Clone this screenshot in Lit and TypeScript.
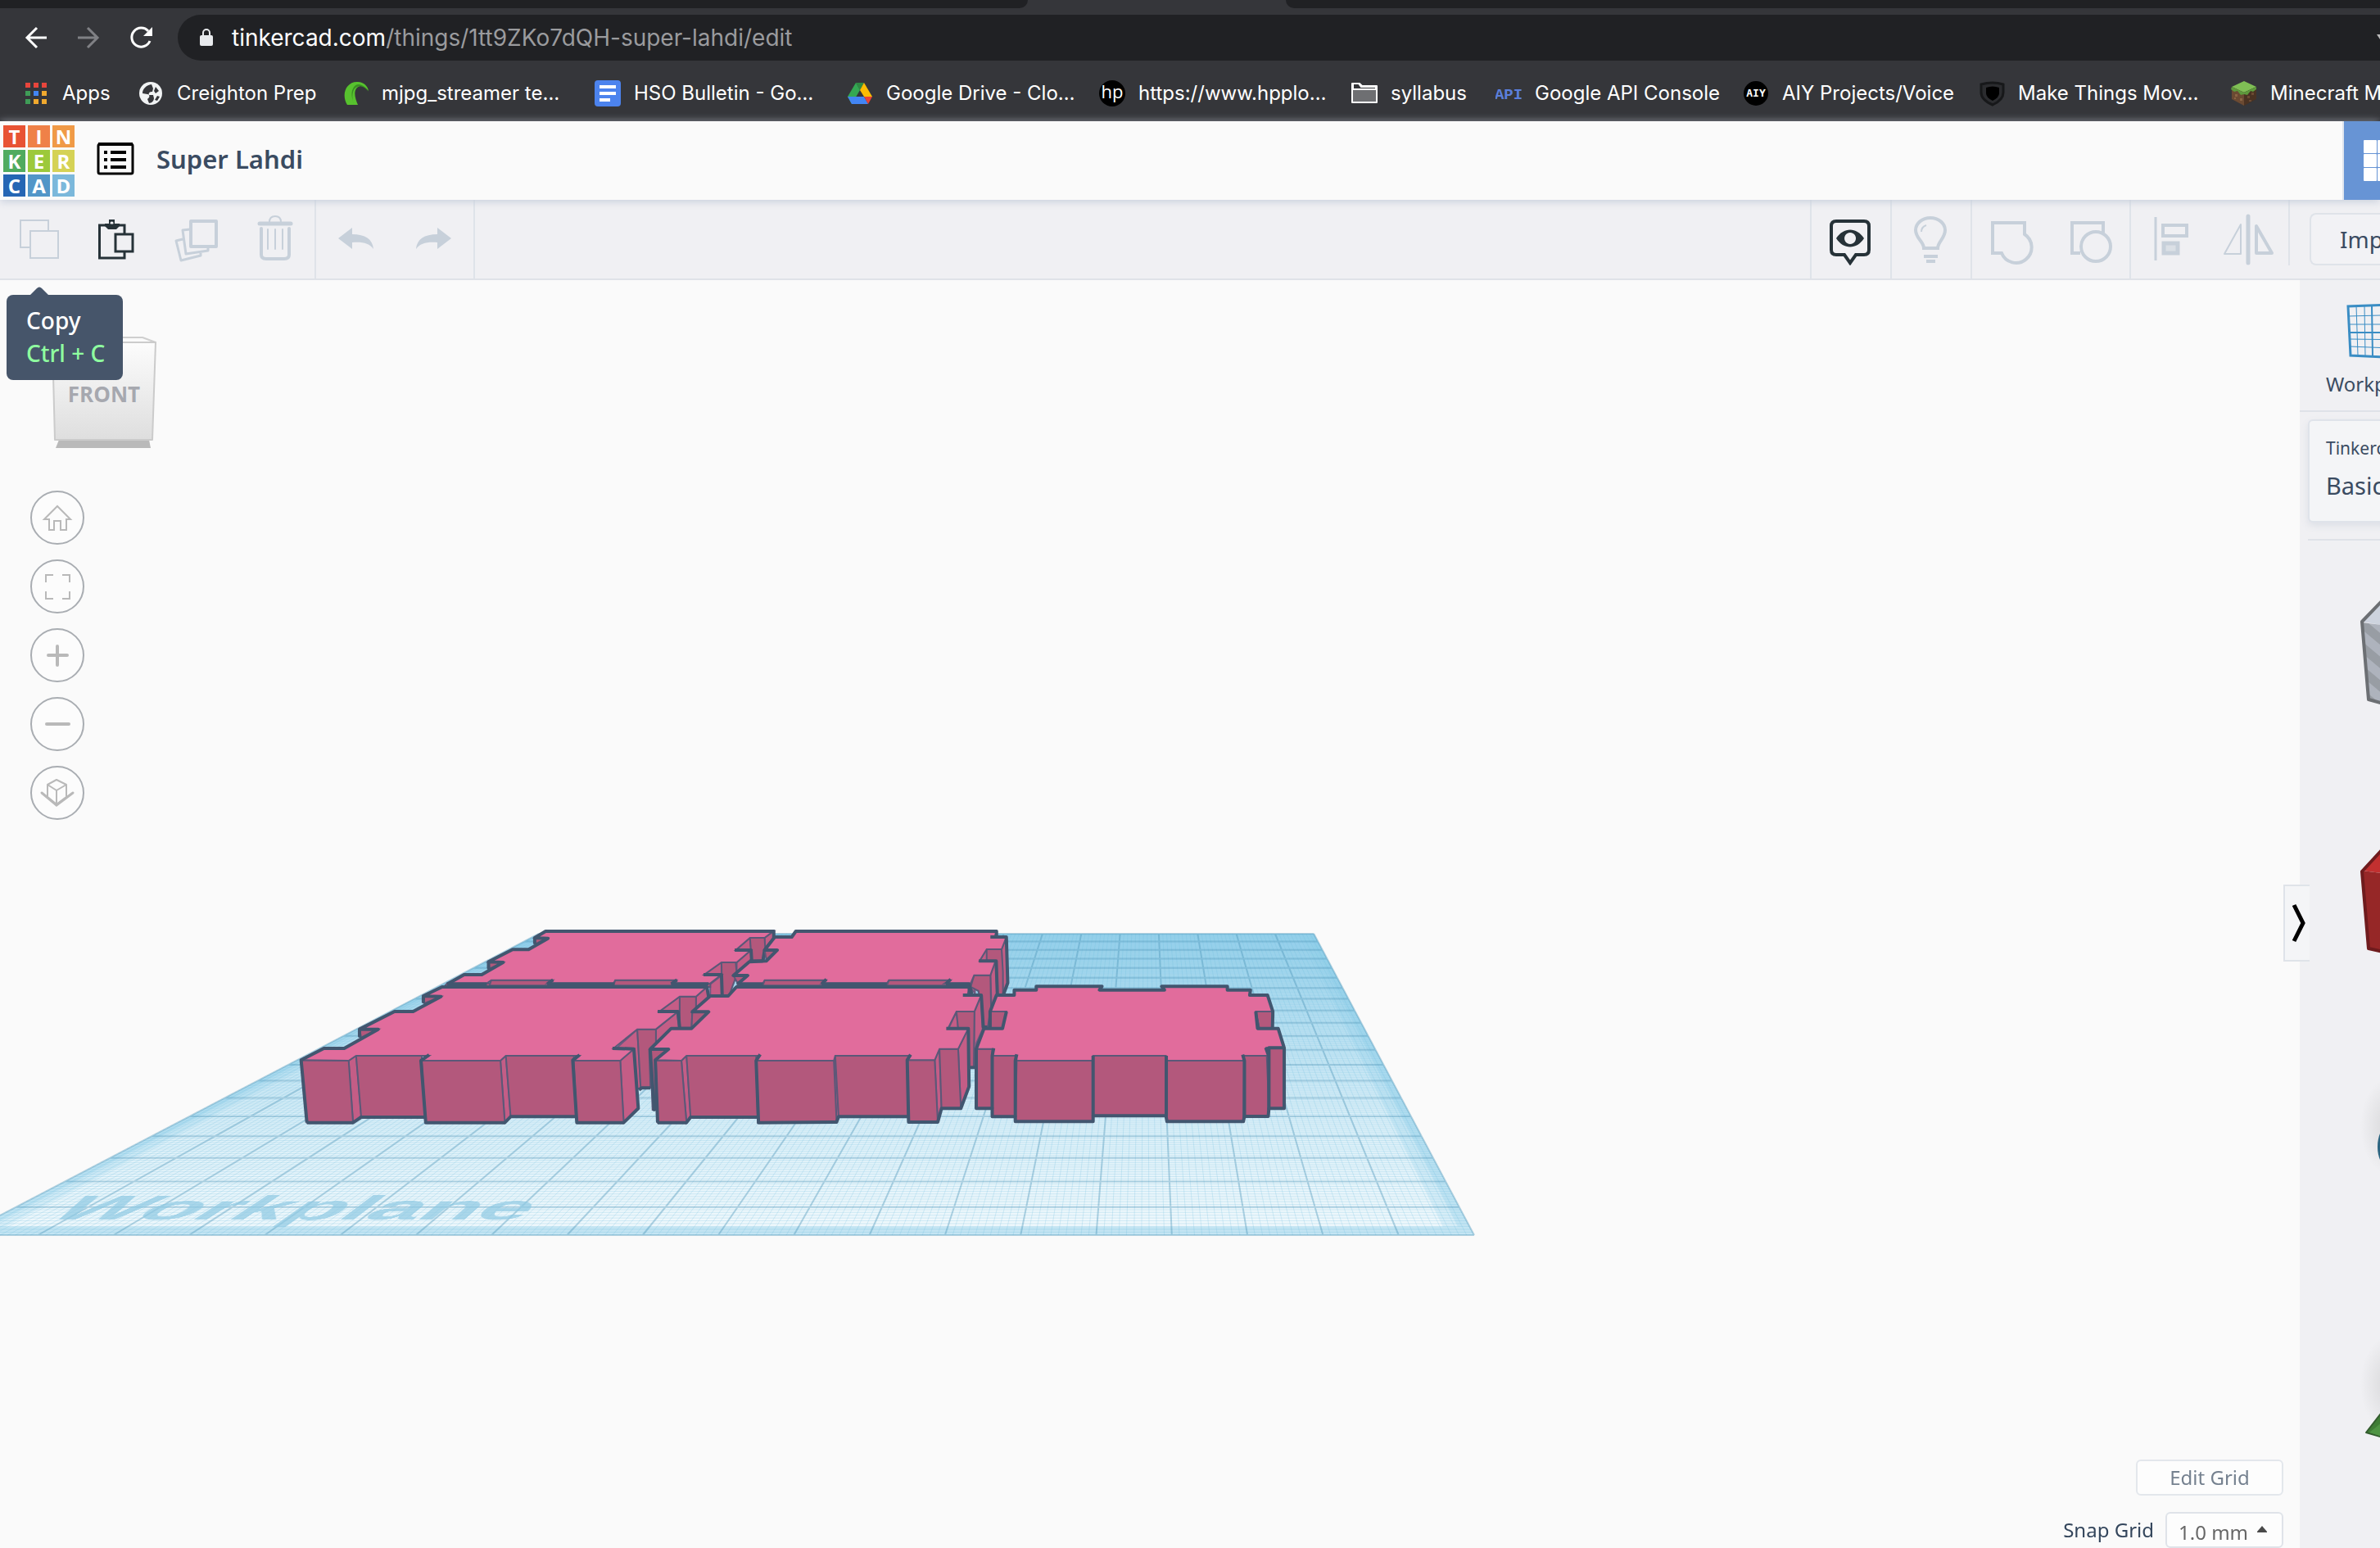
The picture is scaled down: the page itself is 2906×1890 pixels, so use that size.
import { LitElement, html, svg, css } from "lit";
import { customElement } from "lit/decorators.js";

/* ---------- Workplane projection ---------- */

const FRONT_LEFT = -46;
const FRONT_WIDTH = 1846;
const BACK_LEFT = 658;
const DEPTH = 0.951;
const HORIZON = 411;
const DROP = 755;

/** Projects a point of the unit workplane (s to the right, t to the back) to the canvas. */
function project(s: number, t: number): [number, number] {
  const z = 1 + DEPTH * t;
  const shift = BACK_LEFT * (1 + DEPTH) - FRONT_LEFT;
  return [(FRONT_LEFT + shift * t + FRONT_WIDTH * s) / z, HORIZON + DROP / z];
}

function gridPath(steps: number, skip: number): string {
  let d = "";
  const seg = (a: [number, number], b: [number, number]) =>
    (d += `M${a[0].toFixed(1)} ${a[1].toFixed(1)}L${b[0].toFixed(1)} ${b[1].toFixed(1)}`);
  for (let i = 0; i <= steps; i++) {
    if (skip && i % skip === 0) continue;
    const k = i / steps;
    seg(project(k, 0), project(k, 1));
    seg(project(0, k), project(1, k));
  }
  return d;
}

const quad = (s0: number, t0: number, s1: number, t1: number) =>
  [project(s0, t0), project(s1, t0), project(s1, t1), project(s0, t1)]
    .map((p) => p.map((n) => n.toFixed(1)).join(","))
    .join(" ");

/** The same projection as a CSS matrix for a 2000 x 2000 sheet. */
function planeMatrix(): string {
  const size = 2000;
  const shift = BACK_LEFT * (1 + DEPTH) - FRONT_LEFT;
  const w0 = 1 + DEPTH;
  const wy = -DEPTH / size;
  const m = [
    FRONT_WIDTH / size, 0, 0, 0,
    -shift / size, HORIZON * wy, 0, wy,
    0, 0, 1, 0,
    FRONT_LEFT + shift, HORIZON * w0 + DROP, 0, w0,
  ];
  return `matrix3d(${m.map((n) => n.toFixed(8)).join(",")})`;
}

/* ---------- Blocks on the workplane ---------- */

interface Block {
  front: string[];
  side: string[];
  top: string;
  edges: string[];
}

const BACK_LEFT_BLOCK: Block = {
  front: [
    "733,105 770,105 735,128", "597,195 640,195 600,218",
    "475,272 1250,272 1250,285 465,285",
    "605,260 785,260 770,280 600,280", "970,260 1150,260 1135,280 965,280",
    "1367,105 1410,105 1412,150 1405,190 1372,190",
    "1283,195 1325,195 1328,240 1305,318 1285,318",
  ],
  side: [
    "1325,150 1367,105 1370,150", "1410,105 1437,80 1437,108 1410,150",
    "1328,195 1370,150 1372,190 1328,235", "1232,240 1283,195 1283,240",
    "1250,275 1283,243 1285,316 1250,316",
  ],
  top: "765,80 1437,80 1410,105 1367,105 1325,150 1370,150 1328,195 1283,195 1232,240 1283,240 1250,272 1140,272 1150,260 970,260 965,272 770,272 785,260 605,260 592,272 475,272 525,240 577,240 640,195 597,193 668,148 715,148 770,107 733,105",
  edges: [
    "475,275 525,240 577,240 640,195 597,193 597,216 597,193 668,148 715,148 772,107 733,105 733,124 733,105 765,81 1437,81 1437,108 1410,150 1405,190",
    "1322,150 1370,150 1372,190", "1230,240 1283,240 1285,316",
    "592,274 475,274", "770,274 787,259", "770,274 968,274", "1135,274 1152,259", "1135,274 1245,274",
  ],
};

const BACK_RIGHT_BLOCK: Block = {
  front: [
    "1447,150 1410,150 1415,185", "1318,243 1360,243 1330,270",
    "1330,272 2017,272 2017,288 1330,288",
    "1410,260 1590,260 1580,280 1405,280", "1776,260 1956,260 1946,280 1770,280",
    "2064,147 2108,147 2112,230 2112,312 2095,312 2090,190 2064,190",
    "2027,242 2075,242 2078,430 2056,430 2040,300 2017,285",
  ],
  side: [
    "2043,190 2064,147 2067,190", "2108,147 2122,102 2126,270 2112,312",
    "2075,242 2090,190 2100,340 2080,410", "2012,280 2027,242 2030,310",
  ],
  top: "1500,80 2093,80 2088,102 2122,102 2108,147 2064,147 2043,190 2090,190 2075,242 2027,242 2017,272 1940,272 1956,260 1776,260 1770,272 1578,272 1590,260 1410,260 1405,272 1335,272 1360,243 1318,243 1365,193 1415,190 1447,150 1410,150 1440,102 1490,102",
  edges: [
    "1330,275 1360,243 1318,243 1365,193 1415,190 1447,150 1410,150 1440,102 1490,102 1502,81 2093,81 2093,102",
    "2075,102 2122,102 2126,270 2112,318", "2041,190 2092,190 2096,330",
    "1335,274 1405,274", "1578,274 1592,257", "1578,274 1770,274", "1944,274 1958,257", "1944,274 2012,274 2020,310",
    "1405,190 1365,190",
  ],
};

const FRONT_LEFT_BLOCK: Block = {
  front: [
    "405,318 457,320 408,345", "217,440 272,440 222,470",
    "45,553 185,555 198,782 62,782", "207,537 400,537 410,762 222,762",
    "400,555 632,555 645,782 412,782", "648,537 848,537 854,760 662,760",
    "848,555 985,555 995,782 857,782",
    "1035,440 1090,440 1090,490 1070,515 1074,654 1045,654",
    "1160,320 1208,320 1208,365 1197,375 1195,437 1160,437",
  ],
  side: [
    "185,555 207,537 222,757 198,782", "632,555 648,537 662,757 645,782",
    "985,555 1025,512 1038,730 995,782", "975,508 1035,440 1045,654 1035,660 1025,510",
    "1090,440 1152,378 1158,437 1090,490", "1100,375 1160,320 1160,375",
    "1208,320 1240,285 1245,320 1208,365",
  ],
  top: "460,285 1240,285 1208,320 1160,320 1100,375 1155,375 1090,440 1035,440 965,510 1025,512 985,555 848,555 865,537 648,537 632,555 400,555 422,537 207,537 185,555 45,553 112,510 172,510 272,440 217,440 320,375 375,375 457,320 405,318",
  edges: [
    "62,782 45,553 112,510 172,510 272,440 217,440 217,465 217,440 320,375 375,375 457,320 405,318 405,340 405,318 460,285 1240,285 1245,320",
    "1095,375 1155,375 1160,437 1195,437", "962,510 1025,512 1038,730 995,782 857,782 845,553 865,534",
    "62,782 198,782 222,762 410,762", "422,534 398,555 412,782 645,782 662,760 854,760", "1040,662 1048,655 1074,655",
  ],
};

const FRONT_MIDDLE_BLOCK: Block = {
  front: [
    "1197,378 1245,378 1195,437", "1073,513 1125,513 1090,553 1090,735 1080,735",
    "1090,555 1165,555 1180,782 1095,782", "1180,537 1385,537 1392,762 1192,762",
    "1385,555 1614,555 1622,780 1390,782", "1618,537 1838,537 1834,760 1628,760",
    "1830,553 1911,553 1920,780 1834,780", "1925,512 1980,512 1988,730 1931,730",
    "1975,375 2028,375 2026,580 2012,580 2010,437 1980,437",
  ],
  side: [
    "1165,555 1180,537 1192,757 1180,782", "1614,555 1618,537 1628,757 1622,780",
    "1911,553 1925,512 1931,730 1920,780", "1980,512 2010,437 2012,650 1988,728",
    "1952,437 1975,375 1980,437", "2028,375 2048,315 2052,440 2034,490 2026,580",
  ],
  top: "1325,285 2012,285 2008,315 2048,315 2028,375 1975,375 1950,437 2010,437 1980,512 1925,512 1911,553 1830,553 1838,537 1618,537 1614,555 1385,555 1395,537 1180,537 1165,555 1090,553 1125,513 1073,513 1135,437 1195,437 1245,378 1197,378 1250,318 1303,318",
  edges: [
    "1095,782 1088,553 1127,513 1073,513 1085,735 1073,513 1135,437 1195,437 1245,376 1197,376 1250,318 1303,318 1327,285 2012,285 2016,315",
    "1994,315 2048,315 2054,432 2075,432", "1945,437 2010,437 2012,650 1988,730 1931,730 1920,780 1834,780 1830,553 1840,533",
    "1095,782 1180,782 1192,762 1392,762", "1397,532 1385,555 1392,782 1622,780 1628,760 1834,760", "2016,580 2030,580",
  ],
};

const RIGHT_BLOCK: Block = {
  front: [
    "597,375 643,375 632,437 590,437", "1345,375 1393,375 1392,437 1355,437",
    "558,512 603,512 603,730 558,730", "603,537 670,537 668,760 603,760",
    "672,555 885,555 887,778 668,778", "887,537 1092,537 1092,757 887,757",
    "1095,555 1312,555 1310,778 1095,778", "1312,537 1380,537 1380,759 1313,759",
    "1375,508 1425,508 1425,730 1382,730",
  ],
  side: [],
  top: "665,296 727,296 727,283 912,283 905,296 1085,296 1080,283 1265,283 1265,296 1330,296 1328,315 1378,315 1393,375 1345,375 1355,437 1408,437 1425,508 1375,508 1382,537 1308,537 1312,555 1095,555 1092,537 887,537 885,555 672,555 670,537 603,537 607,512 558,512 580,437 632,437 643,375 597,375 615,315 665,315",
  edges: [
    "597,435 597,375 615,315 665,315 665,296 727,296 727,283 912,283 905,296 1088,296 1080,283 1265,283 1265,296 1330,296 1328,315 1378,315 1393,375 1392,435",
    "643,375 632,437 580,437 558,512 558,730 603,730 603,760 668,760 668,778 887,778 887,757 1092,757 1095,778 1310,778 1313,759 1380,759 1382,730 1425,730 1425,508 1408,437 1350,437 1345,375",
    "607,510 603,537 603,730", "672,532 668,555 668,760", "887,537 887,757", "1093,537 1093,757", "1308,533 1313,555 1313,759", "1373,507 1382,540 1382,730 1382,508 1425,508",
  ],
};

const block = (b: Block) => svg`
  ${b.side.map((p) => svg`<polygon class="side" points=${p}></polygon>`)}
  ${b.front.map((p) => svg`<polygon class="front" points=${p}></polygon>`)}
  <polygon class="top" points=${b.top}></polygon>
  ${b.edges.map((p) => svg`<polyline class="edge" points=${p}></polyline>`)}`;

const MINOR = gridPath(200, 10);
const MAJOR = gridPath(20, 0);

/* ---------- Icons ---------- */

const icon = (size: number, body: unknown) =>
  html`<svg width=${size} height=${size} viewBox="0 0 ${size} ${size}" fill="none" aria-hidden="true">${body}</svg>`;

const tools: Record<string, unknown> = {
  copy: svg`<g stroke="currentColor" stroke-width="2"><path d="M20 42H9V9h34v12"/><rect x="21" y="22" width="34" height="33"/></g>`,
  paste: svg`<g stroke="currentColor" stroke-width="3"><path d="M40 25V15H9.500v40H40v-7"/><rect x="29" y="26" width="21" height="21"/></g><path fill="currentColor" fill-rule="evenodd" d="M16 13h5V8h7v5h6v3l-4 4H20l-4-4zM24.500 10.500a2 2 0 1 0 .1 0z"/>`,
  duplicate: svg`<g stroke="currentColor" stroke-width="4" stroke-linejoin="round"><rect x="25" y="10" width="31" height="31"/></g><g stroke="currentColor" stroke-width="3" stroke-linejoin="round"><path d="M24 20l-9 1 4 29 27-4v-4M15 32l-8 2 6 24 24-6v-3"/></g>`,
  trash: svg`<g stroke="currentColor" stroke-linecap="round"><path stroke-width="5" d="M13 13h38"/><path stroke-width="2" d="M25 11c0-5 3-7 7-7s7 2 7 7"/><path stroke-width="4" d="M15 19v32q0 5 6 5h22q6 0 6-5V19"/><path stroke-width="2" d="M23 20v24M32 20v24M41 20v24"/></g>`,
  undo: svg`<path fill="currentColor" d="M11 31 28 18v8c16 0 25 6 26 18-5-7-13-9-26-8v8z"/>`,
  redo: svg`<path fill="currentColor" d="M53 31 36 18v8c-16 0-25 6-26 18 5-7 13-9 26-8v8z"/>`,
  view: svg`<path stroke="currentColor" stroke-width="4" d="M14 10h34q6 0 6 6v29q0 6-6 6H38L31 61l-7-10H14q-6 0-6-6V16q0-6 6-6z"/><path fill="currentColor" fill-rule="evenodd" d="M14 31c9-14 25-14 34 0-9 14-25 14-34 0zM31 24a7 7 0 1 0 .1 0z"/>`,
  bulb: svg`<path stroke="currentColor" stroke-width="4" d="M23 43c0-8-10-12-10-22a18 15 0 0 1 36 0c0 10-9 14-9 22z"/><path stroke="currentColor" stroke-width="2" d="M20 23q0-6 6-8"/><path stroke="currentColor" stroke-width="4" d="M23 53h17M26 59h11"/>`,
  group: svg`<path stroke="currentColor" stroke-width="4" d="M9 12h39v14a19 19 0 1 1-28 23H9z"/>`,
  ungroup: svg`<path stroke="currentColor" stroke-width="4" d="M20 49H10V12h38v12"/><circle cx="39" cy="41" r="18" stroke="currentColor" stroke-width="4"/>`,
  align: svg`<path stroke="currentColor" stroke-width="3" d="M14 5v53"/><rect x="23" y="15" width="29" height="13" stroke="currentColor" stroke-width="4"/><rect x="24" y="37" width="17" height="12" fill="#dbe0e6" stroke="currentColor" stroke-width="5"/>`,
  mirror: svg`<path stroke="currentColor" stroke-width="5" stroke-linecap="round" d="M31 4v57"/><path stroke="currentColor" stroke-width="2" stroke-linejoin="round" d="M22 14v36H2z"/><path stroke="currentColor" stroke-width="4" stroke-linejoin="round" d="M41 16v33h19z"/>`,
};

const nav: [string, unknown][] = [
  ["Home view", svg`<path stroke-width="2" d="M16 34 32 18l16 16h-5v13h-7V36h-8v11h-6V34z"/>`],
  ["Fit all in view", svg`<path stroke-width="2" d="M18 27v-9h9M38 18h9v9M47 38v9h-9M27 47h-9v-9"/>`],
  ["Zoom in", svg`<path stroke-width="4" stroke-linecap="round" d="M21 32h23M32 21v23"/>`],
  ["Zoom out", svg`<path stroke-width="4" stroke-linecap="round" d="M19 32h27"/>`],
  ["Switch to flat view", svg`<path stroke-width="2" stroke-linejoin="round" d="M20 22l11-6 12 6v15L31 46 20 37zM20 22l11 7 12-7M31 29v17"/><path stroke-width="3" stroke-linecap="round" d="M13 32l18 15 20-15"/>`],
];

const appColors = ["#e8453c", "#e8453c", "#e8453c", "#3f9c57", "#4285f4", "#f0a92e", "#3f9c57", "#f0a92e", "#f0a92e"];

const bookmarks: [string, unknown][] = [
  ["Apps", appColors.map((c, i) => svg`<rect x=${3 + (i % 3) * 10} y=${3 + Math.floor(i / 3) * 10} width="6" height="6" fill=${c}/>`)],
  ["Creighton Prep", svg`<circle cx="16" cy="16" r="14" fill="#f1f3f4"/><path fill="#35363a" d="M17 5c-6 1-11 5-11 11l6 1c2 0 3 2 2 4l-2 2 2 5c3 0 6-3 6-6l-1-4h-5c-1-3 1-4 4-4l1-4zM22 8l4 5-4 3-2-3zM24 19l3 1-3 5-3-1z"/>`],
  ["mjpg_streamer te…", svg`<path fill="#57c22e" d="M6 30C-2 17 5 1 19 2c7 0 12 5 13 11-5-6-10-8-14-4-5 5-2 14 1 21z"/><path fill="#3a8f23" d="M14 30c-3-9-2-20 4-22 5-2 10 1 14 6-5-9-15-13-19-4-3 6-1 12 1 20z"/>`],
  ["HSO Bulletin - Go…", svg`<rect width="32" height="32" rx="4" fill="#4c83ee"/><path stroke="#fff" stroke-width="4" d="M6 8h20M6 16h20M6 24h13"/>`],
  ["Google Drive - Clo…", svg`<path fill="#2e8b43" d="M11 3h10l-5 9z"/><path fill="#34a853" d="M11 3 1 20l5 9L16 12z"/><path fill="#fbbc04" d="M21 3 31 20H21l-5-8z"/><path fill="#4285f4" d="M1 20h20l5 9H6z"/><path fill="#ea4335" d="M21 20h10l-5 9z"/>`],
  ["https://www.hpplo…", svg`<circle cx="16" cy="16" r="16" fill="#000"/><text class="hp" x="16" y="22">hp</text>`],
  ["syllabus", svg`<path fill="#6e6f72" stroke="#fff" stroke-width="2" stroke-linejoin="round" d="M1 27V4h9l3 3h18v20z"/><path fill="#35363a" stroke="#fff" stroke-width="2" d="M2 11h28V8H12L9 4H2z"/>`],
  ["Google API Console", svg`<text class="api" x="16" y="23">API</text>`],
  ["AIY Projects/Voice", svg`<circle cx="16" cy="16" r="15" fill="#000"/><text class="aiy" x="16" y="20">AIY</text>`],
  ["Make Things Mov…", svg`<path fill="#2b2c2f" stroke="#17181a" stroke-width="3" d="M3 5q14-4 27 0v10q0 9-13 15Q3 24 3 15z"/><path fill="#000" d="M9 9q8-3 16 0v7q0 5-8 9-8-4-8-9z"/>`],
  ["Minecraft M", svg`<path fill="#7fbf55" d="M16 1 31 8 16 15 1 8z"/><path fill="#6b4a32" d="M1 8l15 7v16L1 23z"/><path fill="#4a3222" d="M31 8l-15 7v16l15-8z"/><path fill="#5d9a3c" d="M1 8l15 7 15-7v3l-4 3-3-1-4 5-4-1-4 1-4-5-4 1-4-3z"/><path fill="#8a6444" d="M5 17h3v3H5zM11 22h3v3h-3zM4 21h2v2H4z"/><path fill="#6b4a32" d="M20 19h3v3h-3zM25 15h3v3h-3zM22 24h3v2h-3z"/>`],
];

const logo: [string, string][] = [
  ["T", "#e85334"], ["I", "#ef8148"], ["N", "#f09a47"],
  ["K", "#50ab5f"], ["E", "#9cc93b"], ["R", "#d5d255"],
  ["C", "#2566b4"], ["A", "#5296c8"], ["D", "#7bb8db"],
];

@customElement("browser-chrome")
class BrowserChrome extends LitElement {
  static styles = css`
    :host { display: block; background: #35363a; color: #fff; font-family: Inter, "Liberation Sans", sans-serif; border-bottom: 2px solid #28292c; overflow: hidden; }
    .tabs { display: flex; height: 10px; }
    .tab-rest { background: #202124; }
    .before { flex: 0 0 1255px; border-bottom-right-radius: 10px; }
    .active { flex: 0 0 315px; }
    .after { flex: 1; border-bottom-left-radius: 10px; }
    .address-row { display: flex; align-items: center; padding: 8px 0 0 12px; }
    button { border: 0; background: none; color: #fff; width: 64px; height: 56px; padding: 0; display: grid; place-items: center; }
    button:disabled { color: #808185; }
    .omnibox { flex: 1; display: flex; align-items: center; gap: 22px; height: 56px; margin-left: 13px; padding-left: 26px; border-radius: 28px 0 0 28px; background: #202124; font-size: 28px; line-height: 32px; position: relative; }
    .path { color: #9a9b9e; }
    .caret { position: absolute; right: 0; top: 24px; }
    nav { display: grid; grid-template-columns: 140px 250px 308px 308px 308px 308px 176px 302px 288px 308px 308px; padding: 24px 0 16px 28px; }
    a { display: flex; align-items: center; gap: 16px; height: 32px; color: inherit; text-decoration: none; font-size: 24px; line-height: 32px; white-space: nowrap; }
    a svg { flex: none; }
    text { text-anchor: middle; }
    .hp { font: 22px "Open Sans", sans-serif; fill: #fff; }
    .api { font: bold 19px "Liberation Mono", monospace; fill: #5b7fdb; }
    .aiy { font: bold 13px "DejaVu Sans Mono", monospace; fill: #fff; }
  `;
  render() {
    return html`
      <div class="tabs"><div class="tab-rest before"></div><div class="active"></div><div class="tab-rest after"></div></div>
      <div class="address-row">
        <button aria-label="Back">${icon(32, svg`<path stroke="currentColor" stroke-width="3" d="M29 16H5M17 4 5 16l12 12"/>`)}</button>
        <button aria-label="Forward" disabled>${icon(32, svg`<path stroke="currentColor" stroke-width="3" d="M3 16h24M15 4l12 12-12 12"/>`)}</button>
        <button aria-label="Reload">${icon(32, svg`<path stroke="currentColor" stroke-width="3" d="M27 20a11.500 11.500 0 1 1-2-12"/><path fill="currentColor" d="M30 3v11H19z"/>`)}</button>
        <div class="omnibox">
          <svg width="18" height="24" viewBox="0 0 18 24" fill="none" aria-hidden="true"><rect x="1" y="9" width="16" height="13" rx="2" fill="#e8eaed"/><path stroke="#e8eaed" stroke-width="2" d="M5 10V6a4 4 0 0 1 8 0v4"/></svg>
          <span>tinkercad.com<span class="path">/things/1tt9ZKo7dQH-super-lahdi/edit</span></span>
          <svg class="caret" width="4" height="6" viewBox="0 0 4 6" aria-hidden="true"><path d="M0 0h4v6z" fill="#bbb"/></svg>
        </div>
      </div>
      <nav aria-label="Bookmarks">
        ${bookmarks.map(([label, body]) => html`<a href="#">${icon(32, body)}<span>${label}</span></a>`)}
      </nav>`;
  }
}

@customElement("design-header")
class DesignHeader extends LitElement {
  static styles = css`
    :host { display: flex; align-items: center; height: 96px; background: #fafafa; box-shadow: 0 2px 10px #c5cddb; position: relative; z-index: 2; font-family: "Noto Sans", sans-serif; }
    .logo { display: grid; grid-template-columns: repeat(3, 27px); grid-auto-rows: 27px; gap: 3px; margin-left: 4px; text-decoration: none; }
    .tile { display: grid; place-items: center; color: #fff; font: bold 24px "Open Sans", sans-serif; line-height: 27px; }
    button { border: 0; background: none; padding: 0; display: grid; place-items: center; }
    .list { width: 48px; height: 48px; margin: 0 0 4px 26px; }
    h1 { margin: 0 auto 4px 26px; font-size: 31px; line-height: 40px; font-weight: 600; color: #3a4b61; }
    .grid { align-self: stretch; width: 46px; background: #6794d5; border-left: 2px solid #dfe5ee; overflow: hidden; justify-content: start; padding-left: 24px; }
  `;
  render() {
    return html`
      <a class="logo" href="#" aria-label="Tinkercad">${logo.map(([l, c]) => html`<span class="tile" style="background:${c}">${l}</span>`)}</a>
      <button class="list" aria-label="Designs">
        ${icon(48, svg`<rect x="3" y="6" width="42" height="36" rx="2" stroke="#000" stroke-width="3"/><path stroke="#000" stroke-width="4" d="M3 6h42M10 16h4M18 16h19M10 25h4M18 25h19M10 34h4M18 34h19"/>`)}
      </button>
      <h1>Super Lahdi</h1>
      <button class="grid" aria-label="3D design">
        <svg width="50" height="50" viewBox="0 0 50 50" aria-hidden="true"><g fill="#fff">${[0, 17, 34].map((y) => [0, 17, 34].map((x) => svg`<rect x=${x} y=${y} width="16" height="16" rx="1"/>`))}</g></svg>
      </button>`;
  }
}

@customElement("tool-bar")
class ToolBar extends LitElement {
  static styles = css`
    :host { display: flex; height: 96px; background: #f0f0f3; border-bottom: 2px solid #dfe2e8; font-family: "Noto Sans", sans-serif; overflow: hidden; }
    .set { display: flex; border-right: 2px solid #dfe3e9; }
    .left { margin-right: auto; display: flex; }
    .first { border-left: 2px solid #dfe3e9; }
    .short { height: 80px; }
    .tool { width: 96px; height: 96px; border: 0; padding: 0; background: none; color: #c7d0da; display: grid; place-items: center; }
    .on { color: #263238; }
    .import { flex: none; width: 86px; height: 64px; margin: 16px 0 0 24px; padding: 0 0 0 35px; border: 2px solid #dfe3e9; border-right: 0; border-radius: 8px 0 0 8px; background: #f2f2f5; color: #3a4b61; font: 28px "Noto Sans", sans-serif; text-align: left; overflow: hidden; white-space: nowrap; }
  `;
  private tool(name: string, label: string, on = false) {
    return html`<button class="tool ${on ? "on" : ""}" aria-label=${label}>${icon(64, tools[name])}</button>`;
  }
  render() {
    return html`
      <div class="left">
        <div class="set">${this.tool("copy", "Copy")}${this.tool("paste", "Paste", true)}${this.tool("duplicate", "Duplicate")}${this.tool("trash", "Delete")}</div>
        <div class="set">${this.tool("undo", "Undo")}${this.tool("redo", "Redo")}</div>
      </div>
      <div class="set first">${this.tool("view", "Show all", true)}</div>
      <div class="set">${this.tool("bulb", "Notes")}</div>
      <div class="set">${this.tool("group", "Group")}${this.tool("ungroup", "Ungroup")}</div>
      <div class="set short">${this.tool("align", "Align")}${this.tool("mirror", "Mirror")}</div>
      <button class="import">Import</button>`;
  }
}

@customElement("work-view")
class WorkView extends LitElement {
  static styles = css`
    :host { display: flex; flex-direction: column; position: relative; overflow: hidden; background: #fafafa; font-family: "Noto Sans", sans-serif; }
    .scene { position: absolute; left: 0; top: 0; }
    .front { fill: #b3587c; stroke: #5b5878; stroke-width: 2px; }
    .side { fill: #c45d86; stroke: #6d5a80; stroke-width: 2px; }
    .top { fill: #e16c9c; stroke: #5b5878; stroke-width: 2px; }
    .edge { fill: none; stroke: #42566f; stroke-width: 4px; stroke-linejoin: round; }
    .blocks * { vector-effect: non-scaling-stroke; }
    .sheet { position: absolute; left: 0; top: 0; width: 2000px; height: 2000px; transform-origin: 0 0; display: flex; align-items: flex-end; padding: 0 0 28px 68px; box-sizing: border-box; color: #8ec9e3; opacity: 0.7; font: bold 128px "Liberation Sans", sans-serif; line-height: 140px; }
    .cube-text { font: bold 26px "Open Sans", sans-serif; fill: #a6a8af; text-anchor: middle; }
    .nav { position: relative; display: flex; flex-direction: column; gap: 18px; padding: 257px 0 0 37px; margin-bottom: auto; }
    .nav button { width: 66px; height: 66px; border: 2px solid #a9adb2; border-radius: 50%; background: #fcfcfc; padding: 0; display: grid; place-items: center; }
    .nav svg { stroke: #b9b9b9; margin: -1px; }
    .tip { position: absolute; left: 8px; top: 18px; width: 142px; height: 104px; box-sizing: border-box; padding: 11px 24px; border-radius: 8px; background: #46556a; color: #fff; font-size: 28px; font-weight: 500; line-height: 40px; white-space: nowrap; }
    .tip svg { position: absolute; left: 28px; top: -10px; }
    .key { color: #8fffa0; }
    .footer { position: relative; display: flex; flex-direction: column; align-items: flex-end; gap: 20px; padding-right: 20px; }
    .edit { width: 180px; height: 44px; border: 2px solid #e3e7ec; border-radius: 6px; background: #fdfdfd; color: #75818f; font: 24px "Noto Sans", sans-serif; padding: 0 0 2px; }
    .snap { display: flex; align-items: center; gap: 14px; color: #34465c; font-size: 24px; line-height: 32px; }
    .pick { display: grid; align-items: center; }
    select { grid-area: 1 / 1; appearance: none; width: 144px; height: 44px; border: 2px solid #dfe3e9; border-radius: 6px; background: #fdfdfd; color: #666; font: 24px "Noto Sans", sans-serif; padding: 4px 0 0 14px; }
    .pick svg { grid-area: 1 / 1; justify-self: end; margin: 0 20px 2px 0; pointer-events: none; }
  `;
  render() {
    return html`
      <svg class="scene" width="2808" height="1548" viewBox="0 0 2808 1548" aria-hidden="true">
        <defs>
          <linearGradient id="water" x1="0" y1="0" x2="0" y2="1"><stop offset="0" stop-color="#a0d6ee"/><stop offset="0.300" stop-color="#bfe3f3"/><stop offset="0.600" stop-color="#daeff8"/><stop offset="1" stop-color="#eff8fc"/></linearGradient>
          <linearGradient id="rim" x1="0" y1="0" x2="0" y2="1"><stop offset="0" stop-color="#9bd4ec"/><stop offset="1" stop-color="#c4e5f3"/></linearGradient>
          <linearGradient id="face" x1="0" y1="0" x2="0" y2="1"><stop offset="0" stop-color="#fcfcfc"/><stop offset="1" stop-color="#dedede"/></linearGradient>
        </defs>
        <polygon points=${quad(0, 0, 1, 1)} fill="url(#rim)"></polygon>
        <polygon points=${quad(0.008, 0.015, 0.992, 0.985)} fill="url(#water)" opacity="0.500"></polygon>
        <polygon points=${quad(0.018, 0.015, 0.982, 0.985)} fill="url(#water)"></polygon>
        <path d=${MINOR} stroke="#6cbcdc" stroke-opacity="0.240" fill="none"></path>
        <path d=${MAJOR} stroke="#4590b5" stroke-opacity="0.380" stroke-width="2" fill="none"></path>
        <g stroke-linejoin="round">
          <polygon points="64,76 76,70 174,70 190,76" fill="#fafafa" stroke="#cfcfcf" stroke-width="2"></polygon>
          <polygon points="72,195 182,195 184,205 68,205" fill="#b9b9b9"></polygon>
          <polygon points="64,76 190,76 186,195 67,195" fill="url(#face)" stroke="#cbcbcb" stroke-width="2"></polygon>
          <text class="cube-text" x="127" y="149">FRONT</text>
        </g>
      </svg>
      <div class="sheet" style="transform:${planeMatrix()}">Workplane</div>
      <svg class="scene" width="2808" height="1548" viewBox="0 0 2808 1548" aria-hidden="true">
        <g class="blocks" transform="translate(349 768) scale(0.4146 0.3333)">
          ${block(BACK_LEFT_BLOCK)}${block(BACK_RIGHT_BLOCK)}${block(FRONT_LEFT_BLOCK)}${block(FRONT_MIDDLE_BLOCK)}
        </g>
        <g class="blocks" transform="translate(950 768) scale(0.4337 0.3333)">${block(RIGHT_BLOCK)}</g>
      </svg>
      <div class="nav">
        ${nav.map(([label, body]) => html`<button aria-label=${label}>${icon(64, body)}</button>`)}
      </div>
      <div class="tip" role="tooltip">
        <svg width="24" height="11" viewBox="0 0 24 11" aria-hidden="true"><path d="M0 11 9 2q3-3 6 0l9 9z" fill="#46556a"/></svg>
        <div>Copy</div><div class="key">Ctrl + C</div>
      </div>
      <div class="footer">
        <button class="edit">Edit Grid</button>
        <div class="snap">
          <label for="snap">Snap Grid</label>
          <div class="pick">
            <select id="snap"><option>1.0 mm</option></select>
            <svg width="12" height="8" viewBox="0 0 12 8" aria-hidden="true"><path d="M6 0l6 7v1H0V7z" fill="#4a4a4a"/></svg>
          </div>
        </div>
      </div>`;
  }
}

@customElement("shape-panel")
class ShapePanel extends LitElement {
  static styles = css`
    :host { display: block; position: relative; background: #f0f0f3; color: #3a4b61; font-family: "Noto Sans", sans-serif; white-space: nowrap; }
    .clip { overflow: hidden; height: 100%; }
    .plane { display: flex; flex-direction: column; gap: 14px; width: 98px; height: 161px; box-sizing: border-box; padding: 29px 0 0 32px; border: 0; border-bottom: 2px solid #dfe2e8; background: none; color: inherit; font: 24px "Noto Sans", sans-serif; line-height: 32px; text-align: left; overflow: hidden; }
    .plane svg { margin-left: 25px; flex: none; }
    .card { display: block; width: 100px; margin: 9px 0 0 10px; height: 126px; box-sizing: border-box; padding: 0 0 0 20px; border: 2px solid #dfe3ea; border-radius: 6px; background: #f4f5f7; color: inherit; text-align: left; font: 21px "Noto Sans", sans-serif; box-shadow: 0 4px 10px #dcdfe6; overflow: hidden; }
    .small { display: block; line-height: 36px; }
    .big { display: block; font-size: 29px; line-height: 56px; }
    .shapes { margin: 20px 0 0 10px; border-top: 2px solid #dfe2e8; }
    .shapes svg { display: block; }
    .toggle { position: absolute; left: -20px; top: 738px; width: 32px; height: 94px; border: 2px solid #dfe3e9; border-right: 0; background: #f4f5f7; padding: 0 0 0 4px; display: grid; place-items: center; z-index: 1; }
  `;
  render() {
    return html`
      <div class="clip">
        <button class="plane">
          <svg width="90" height="68" viewBox="0 0 90 68" fill="none" stroke="#3a8dc4" aria-hidden="true">
            <path stroke-width="3" d="M82 0 2 3l3 60 77 4"/><path stroke-width="2" d="M31 2l1 62M3 35h80"/>
            <path stroke-width="1" d="M12 2l2 61M22 2l1 62M50 1v65M2 15l80-2M3 25h80M4 43l76 1M4 52l75 3"/>
          </svg>
          <span>Workplane</span>
        </button>
        <button class="card"><span class="small">Tinkercad</span><span class="big">Basic Shapes</span></button>
        <div class="shapes">
          <svg width="88" height="1230" viewBox="2818 660 88 1230" aria-hidden="true">
            <defs>
              <radialGradient id="sh"><stop offset="0" stop-color="#d6d6d8"/><stop offset="1" stop-color="#d6d6d8" stop-opacity="0"/></radialGradient>
              <pattern id="stripe" width="22" height="22" patternUnits="userSpaceOnUse" patternTransform="rotate(40)"><rect width="22" height="22" fill="#aeb3bd"/><rect width="22" height="11" fill="#989da4"/></pattern>
            </defs>
            <path fill="#cdd3de" d="M2884 759l24-24v28z"/><path fill="url(#stripe)" d="M2884 760l24 3v96l-16-5z"/>
            <path fill="none" stroke="#6c6f73" stroke-width="4" stroke-linejoin="round" d="M2908 734l-24 25 8 95 18 5"/>
            <path fill="#c23030" d="M2884 1063l24-27v30z"/><path fill="#962727" d="M2884 1063l24 3v95l-16-3z"/>
            <path fill="none" stroke="#6f1b1d" stroke-width="4" stroke-linejoin="round" d="M2908 1038l-24 26 8 94 18 4"/>
            <ellipse cx="2920" cy="1375" rx="38" ry="60" fill="url(#sh)"/><ellipse cx="2915" cy="1400" rx="12" ry="24" fill="#2b6480"/>
            <ellipse cx="2920" cy="1690" rx="38" ry="60" fill="url(#sh)"/>
            <path fill="#3f7d36" stroke="#335c2e" stroke-width="2" stroke-linejoin="round" d="M2889 1749l21-27v33z"/><path fill="#4f9444" d="M2893 1749l15-12v17z"/>
          </svg>
        </div>
      </div>
      <button class="toggle" aria-label="Collapse panel"><svg width="18" height="48" viewBox="0 0 18 48" fill="none" aria-hidden="true"><path stroke="#000" stroke-width="5" d="M3 2l11 22L3 46"/></svg></button>`;
  }
}

@customElement("app-root")
class AppRoot extends LitElement {
  static styles = css`
    :host { display: grid; grid-template-rows: auto auto auto 1fr; height: 100vh; overflow: hidden; }
    .main { display: grid; grid-template-columns: 1fr 98px; min-height: 0; }
    work-view, shape-panel { min-height: 0; min-width: 0; }
  `;
  render() {
    return html`
      <browser-chrome></browser-chrome>
      <design-header></design-header>
      <tool-bar></tool-bar>
      <div class="main"><work-view></work-view><shape-panel></shape-panel></div>`;
  }
}
